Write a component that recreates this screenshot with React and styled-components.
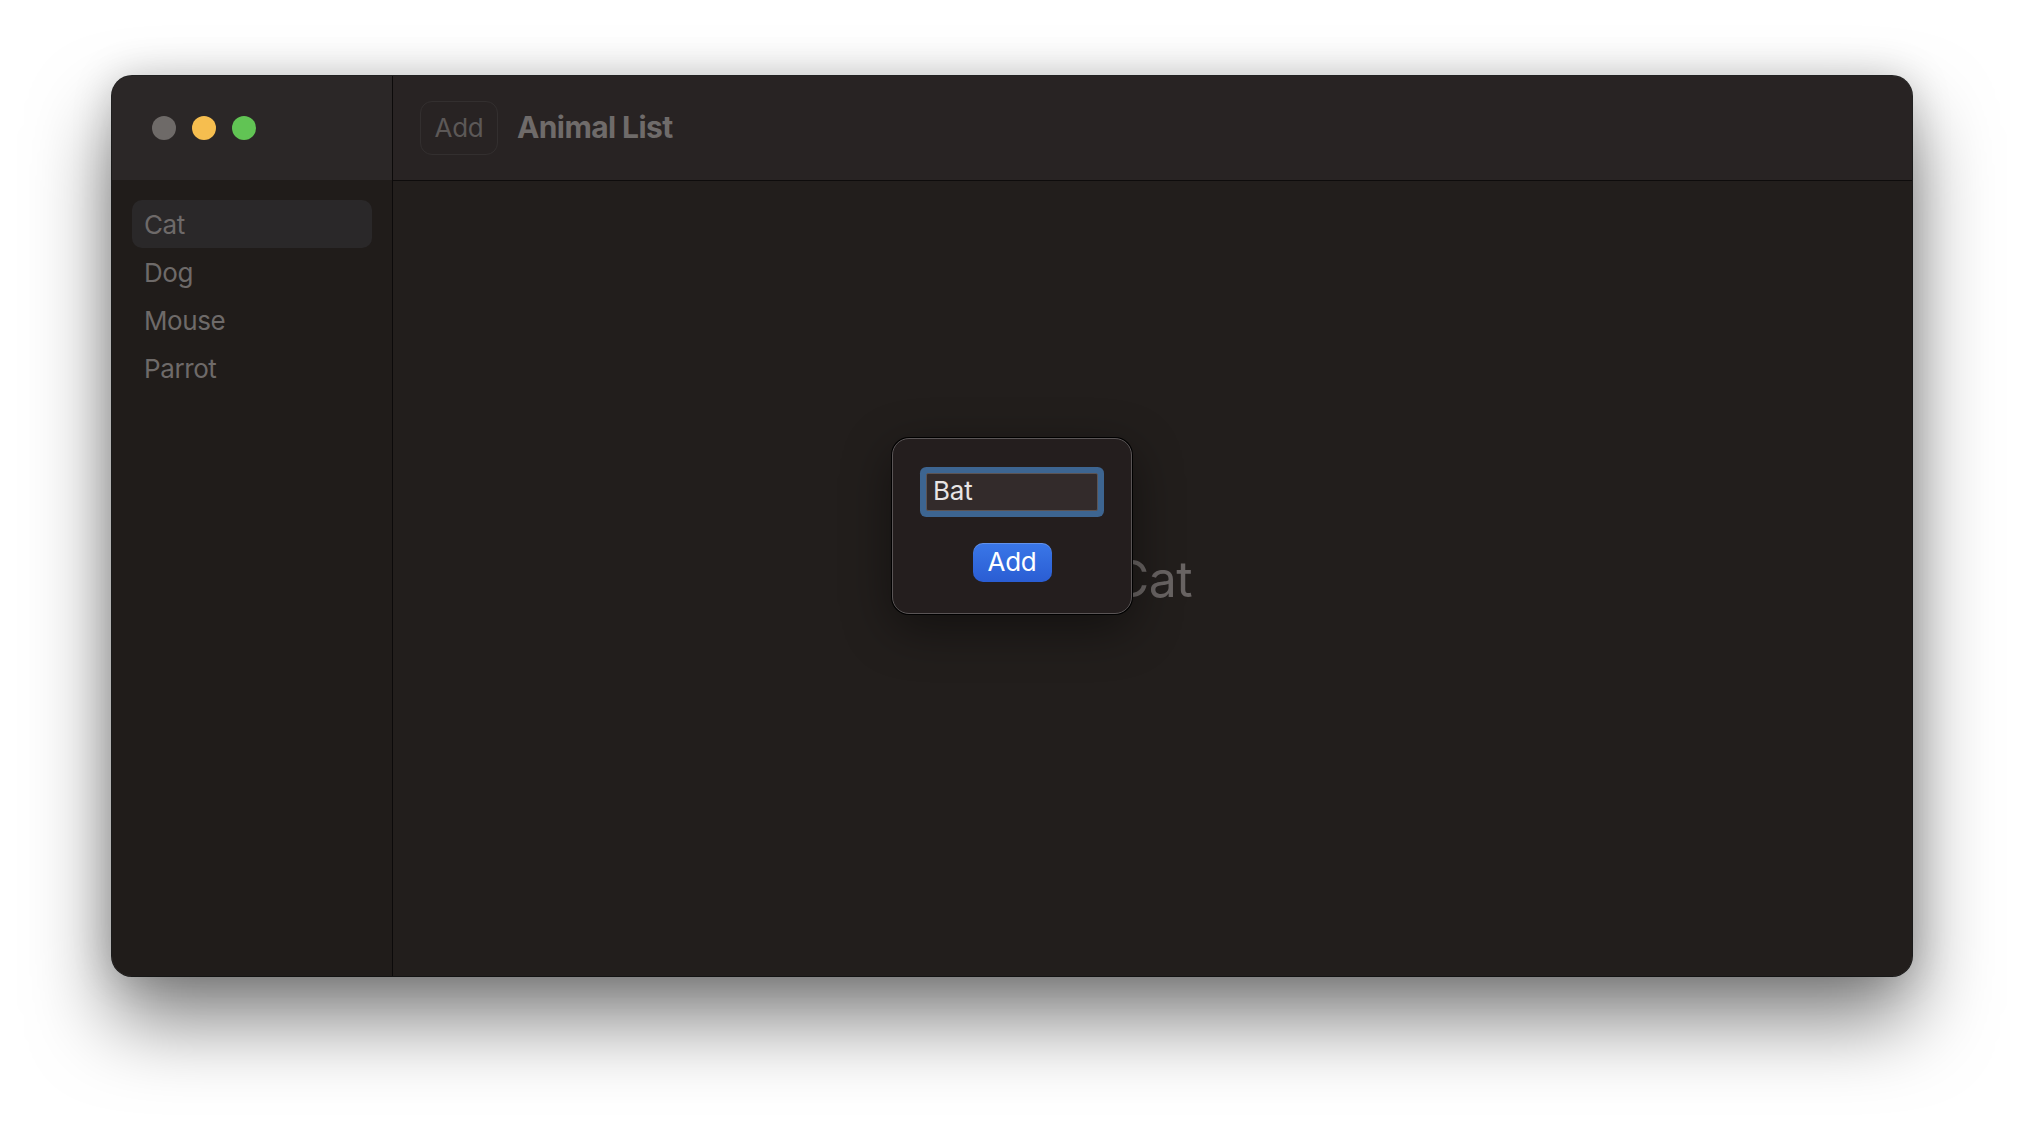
import React from "react";
import styled, { createGlobalStyle } from "styled-components";

const GlobalStyle = createGlobalStyle`
  html, body {
    margin: 0;
    padding: 0;
    background: #ffffff;
  }
  body {
    font-family: "Inter", "Noto Sans", sans-serif;
    -webkit-font-smoothing: antialiased;
  }
`;

const Page = styled.div`
  width: 2024px;
  height: 1124px;
  box-sizing: border-box;
  padding: 76px 0 0 112px;
  overflow: hidden;
`;

const Window = styled.div`
  position: relative;
  width: 1800px;
  height: 900px;
  border-radius: 20px;
  overflow: hidden;
  display: grid;
  grid-template-columns: 280px 1px 1fr;
  background: #221e1c;
  box-shadow:
    0 0 0 1px rgba(0, 0, 0, 0.85),
    inset 0 0 0 1px rgba(255, 255, 255, 0.16),
    0 44px 80px rgba(0, 0, 0, 0.5),
    0 0 40px rgba(0, 0, 0, 0.18);
`;

const Sidebar = styled.aside`
  display: flex;
  flex-direction: column;
  background: #201c1a;
`;

const SidebarTitlebar = styled.div`
  height: 104px;
  flex: none;
  display: flex;
  align-items: center;
  gap: 16px;
  padding-left: 40px;
  background: #2b2727;
`;

const Light = styled.span`
  width: 24px;
  height: 24px;
  border-radius: 50%;
  background: ${(p) => p.$color};
`;

const List = styled.ul`
  list-style: none;
  margin: 0;
  padding: 20px 20px 0;
`;

const Item = styled.li`
  height: 48px;
  line-height: 50px;
  padding-left: 12px;
  border-radius: 10px;
  font-size: 26px;
  letter-spacing: -0.4px;
  color: #6e6a69;
  background: ${(p) => (p.$selected ? "#2a2829" : "transparent")};
`;

const Divider = styled.div`
  background: #0c0a0a;
`;

const Main = styled.section`
  position: relative;
  display: flex;
  flex-direction: column;
  min-width: 0;
`;

const Toolbar = styled.header`
  height: 104px;
  flex: none;
  display: flex;
  align-items: center;
  padding-left: 27px;
  background: #282323;
  border-bottom: 1px solid #0e0c0c;
`;

const ToolbarButton = styled.button`
  width: 78px;
  height: 54px;
  border: 1px solid #332f2f;
  border-radius: 12px;
  background: transparent;
  font-family: inherit;
  font-size: 26px;
  letter-spacing: -0.3px;
  color: #5c5857;
  padding: 0 0 2px;
`;

const Title = styled.h1`
  margin: 0 0 2px 19px;
  font-size: 30px;
  font-weight: 700;
  color: #6f6b6a;
  letter-spacing: -0.6px;
`;

const Content = styled.div`
  flex: 1;
  display: flex;
  align-items: center;
  justify-content: center;
  background: #221e1c;
`;

const Detail = styled.div`
  font-size: 50px;
  letter-spacing: -0.5px;
  color: #696463;
`;

const Popover = styled.div`
  position: absolute;
  left: 499px;
  top: 362px;
  width: 240px;
  box-sizing: border-box;
  padding: 34px 34px 31px;
  display: flex;
  flex-direction: column;
  align-items: center;
  gap: 32px;
  background: #241e1e;
  border: 1px solid #5a5556;
  border-radius: 17px;
  box-shadow:
    0 0 0 1px #000,
    0 14px 50px rgba(0, 0, 0, 0.45);
`;

const Field = styled.div`
  width: 172px;
  height: 38px;
  box-sizing: border-box;
  padding: 0 0 3px 6px;
  display: flex;
  align-items: center;
  background: #332b2b;
  border: 1px solid #5c5454;
  border-radius: 2px;
  box-shadow: 0 0 0 6px #3d6591;
  font-size: 26px;
  letter-spacing: -0.2px;
  color: #e8e4e4;
`;

const PrimaryButton = styled.button`
  width: 79px;
  height: 39px;
  border: none;
  border-radius: 10px;
  padding: 0 0 2px;
  background: linear-gradient(#3a77e8, #2a5dd3);
  box-shadow: inset 0 1px 0 rgba(255, 255, 255, 0.2);
  font-family: inherit;
  font-size: 26px;
  letter-spacing: -0.2px;
  color: #ffffff;
`;

const animals = ["Cat", "Dog", "Mouse", "Parrot"];

export default function App() {
  return (
    <Page>
      <GlobalStyle />
      <Window>
        <Sidebar>
          <SidebarTitlebar>
            <Light $color="#6e6a68" />
            <Light $color="#f6be4f" />
            <Light $color="#61c454" />
          </SidebarTitlebar>
          <List>
            {animals.map((a) => (
              <Item key={a} $selected={a === "Cat"}>
                {a}
              </Item>
            ))}
          </List>
        </Sidebar>
        <Divider />
        <Main>
          <Toolbar>
            <ToolbarButton>Add</ToolbarButton>
            <Title>Animal List</Title>
          </Toolbar>
          <Content>
            <Detail>Cat</Detail>
          </Content>
          <Popover>
            <Field>Bat</Field>
            <PrimaryButton>Add</PrimaryButton>
          </Popover>
        </Main>
      </Window>
    </Page>
  );
}
